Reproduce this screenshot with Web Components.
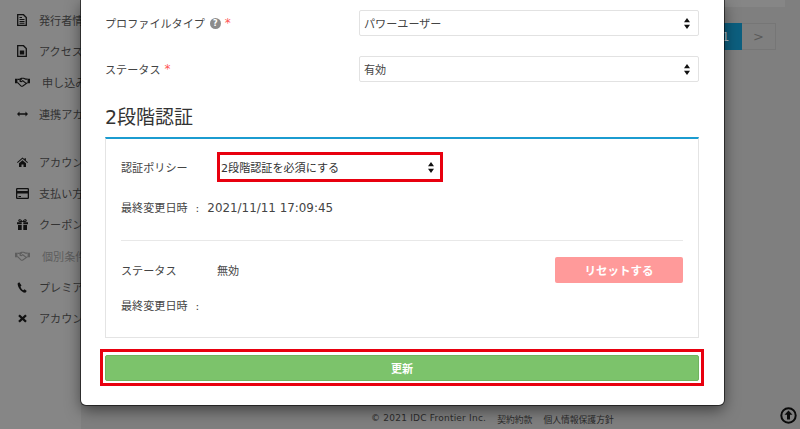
<!DOCTYPE html>
<html lang="ja">
<head>
<meta charset="utf-8">
<title>2段階認証</title>
<style>
  html, body { margin: 0; height: 100%; }
  body {
    font-family: "DejaVu Sans", "Noto Sans CJK JP", sans-serif;
    font-size: 11.1px;
    color: #333;
    overflow: hidden;
  }
</style>
</head>
<body>
<template id="nav-icons">
  <svg data-name="doc" width="10" height="12" viewBox="0 0 10 12"><path fill="none" stroke="currentColor" stroke-width="1.300" d="M.7.7h5.800L9.300 3.500v7.800H.7z"/><path fill="currentColor" d="M2.500 5h5v1h-5zM2.500 6.900h5v1h-5zM2.500 8.800h5v1h-5zM2.500 3h2.500v1H2.500z"/></svg>
  <svg data-name="file" width="10" height="12" viewBox="0 0 10 12"><path fill="none" stroke="currentColor" stroke-width="1.300" d="M.7.7h5.800L9.300 3.500v7.800H.7z"/><path fill="currentColor" d="M2.800 5.500h4.400v4H2.800z"/></svg>
  <svg data-name="shake" width="15" height="10" viewBox="0 0 15 10"><path fill="currentColor" d="M0 1.800h2.400v4.400H0zM12.600 1.800H15v4.400h-2.400z"/><path fill="none" stroke="currentColor" stroke-width="1.100" d="M2.400 2.400h1.800L6.300 1.200h2.300l2 .9h2M2.400 5.400l3.500 3.500c.6.500 1.300.5 1.900.1l4.800-3.400M6.800 1.600L4.800 3.900c.9 1.100 2 .9 3-.2l3.700 2.900"/></svg>
  <svg data-name="arrows" width="11" height="6" viewBox="0 0 11 6"><path fill="currentColor" d="M0 3l2.500-2.600V2.200h6V.4L11 3 8.500 5.600V3.800h-6v1.800z"/></svg>
  <svg data-name="home" width="11" height="10" viewBox="0 0 11 10"><path fill="currentColor" d="M5.500 .5l2 1.800V1.200h1.400v2.300L11 5.300l-.7.7-4.800-4.200L.7 6 0 5.300zM2 6.200l3.500-3 3.500 3V10H6.500V7.500h-2V10H2z"/></svg>
  <svg data-name="card" width="13" height="11" viewBox="0 0 13 11"><path fill="currentColor" fill-rule="evenodd" d="M1.200 0h10.600A1.200 1.200 0 0 1 13 1.200v8.600A1.200 1.200 0 0 1 11.800 11H1.200A1.200 1.200 0 0 1 0 9.800V1.200A1.200 1.200 0 0 1 1.200 0zM1.300 1.300v1.700h10.400V1.300zM1.300 5.500v4.200h10.400V5.500zM2.500 7.900h2.500v1H2.500z"/></svg>
  <svg data-name="gift" width="11" height="11" viewBox="0 0 11 11"><path fill="currentColor" d="M0 3.300h4.700v2H0zM6.300 3.300H11v2H6.300zM1 6h3.700v5H1zM6.300 6H10v5H6.300zM2.800.2C4 .2 5 1.300 5.500 2.500 6 1.300 7 .2 8.200.2c1 0 1.600.7 1.600 1.400 0 .8-.6 1.400-1.600 1.400H2.800c-1 0-1.600-.6-1.600-1.400C1.200.9 1.800.2 2.800.2zm0 1c-.6 0-.6.8 0 .8h1.500c-.4-.5-1-.8-1.500-.8zm5.400 0c-.5 0-1.100.3-1.500.8h1.500c.6 0 .6-.8 0-.8z"/></svg>
  <svg data-name="phone" width="10" height="11" viewBox="0 0 10 11"><path fill="currentColor" d="M2.300 .3L.7 1.200C.2 4.500 3.800 10.300 8.300 10.800l1.500-1.700-2.300-1.800-1.100 1C5 7.800 3.700 5.600 3.500 4.400l1-.9z"/></svg>
  <svg data-name="cross" width="9" height="9" viewBox="0 0 9 9"><path fill="currentColor" d="M1.800.4L4.500 3 7.200.4 8.800 2 6.200 4.500 8.800 7 7.200 8.600 4.500 6 1.800 8.600.2 7l2.600-2.500L.2 2z"/></svg>
</template>

<app-page>
  <side-nav slot="nav">
    <nav-item icon="doc">発行者情報</nav-item>
    <nav-item icon="file">アクセスキー</nav-item>
    <nav-item icon="shake" wide>申し込み</nav-item>
    <nav-item icon="arrows">連携アカウ</nav-item>
    <nav-item icon="home" group>アカウント</nav-item>
    <nav-item icon="card">支払い方法</nav-item>
    <nav-item icon="gift">クーポン</nav-item>
    <nav-item icon="shake" wide muted>個別条件</nav-item>
    <nav-item icon="phone">プレミアム</nav-item>
    <nav-item icon="cross">アカウント</nav-item>
  </side-nav>
  <page-pager slot="main"></page-pager>
  <page-foot slot="foot"></page-foot>
  <modal-dialog slot="modal">
    <form-row required help label="プロファイルタイプ"><select-box>パワーユーザー</select-box></form-row>
    <form-row required label="ステータス"><select-box>有効</select-box></form-row>
    <two-factor></two-factor>
    <save-button>更新</save-button>
  </modal-dialog>
</app-page>

<script>
class AppPage extends HTMLElement {
  constructor() {
    super();
    this.attachShadow({ mode: 'open' });
    this.shadowRoot.innerHTML = `
      <style>
        :host {
          display: grid;
          grid-template-columns: 81px 1fr;
          grid-template-rows: 1fr auto;
          position: relative;
          height: 429px;
          overflow: hidden;
          background: #7f7f7f;
        }
        .nav { background: #868686; grid-row: 1 / 3; overflow: hidden; }
        .main { min-width: 0; }
        .foot { grid-column: 2; }
        .modal { position: absolute; top: 0; left: 81px; z-index: 2; }
      </style>
      <div class="nav"><slot name="nav"></slot></div>
      <div class="main"><slot name="main"></slot></div>
      <div class="foot"><slot name="foot"></slot></div>
      <div class="modal"><slot name="modal"></slot></div>
    `;
  }
}

class SideNav extends HTMLElement {
  constructor() {
    super();
    this.attachShadow({ mode: 'open' });
    this.shadowRoot.innerHTML = `
      <style>
        :host { display: flex; flex-direction: column; width: 200px; padding-top: 4px; }
      </style>
      <slot></slot>
    `;
  }
}

class NavItem extends HTMLElement {
  constructor() {
    super();
    this.attachShadow({ mode: 'open' });
  }

  connectedCallback() {
    const name = this.getAttribute('icon');
    const icon = document.getElementById('nav-icons').content.querySelector(`[data-name="${name}"]`).cloneNode(true);
    this.shadowRoot.innerHTML = `
      <style>
        :host {
          display: flex;
          align-items: center;
          height: 31.3px;
          color: #111;
          white-space: nowrap;
        }
        :host([group]) { margin-top: 17px; }
        :host([muted]) { color: #5e5e5e; }
        .icon { width: 39px; flex: none; display: flex; justify-content: center; padding-left: 5px; box-sizing: border-box; }
        :host([wide]) .icon { width: 42px; padding-right: 3px; }
        .label { color: #333; }
        :host([muted]) .label { color: #5e5e5e; }
      </style>
      <span class="icon"></span><span class="label"><slot></slot></span>
    `;
    this.shadowRoot.querySelector('.icon').append(icon);
  }
}

class PagePager extends HTMLElement {
  constructor() {
    super();
    this.attachShadow({ mode: 'open' });
    this.shadowRoot.innerHTML = `
      <style>
        :host { display: block; padding-right: 15px; }
        .bar { height: 7px; background: #868686; }
        .pages { display: flex; justify-content: flex-end; margin: 16px 9px 0 0; font-size: 12px; }
        .pages span { display: flex; align-items: center; justify-content: center; height: 27px; box-sizing: border-box; }
        .cur { width: 33px; background: #0c5f7f; color: #b0c4d0; }
        .next { width: 34px; color: #5a5a5a; border: 1px solid #767676; border-left: 0; font-size: 13px; }
      </style>
      <div class="bar"></div>
      <div class="pages"><span class="cur">1</span><span class="next">&gt;</span></div>
    `;
  }
}

class PageFoot extends HTMLElement {
  constructor() {
    super();
    this.attachShadow({ mode: 'open' });
    this.shadowRoot.innerHTML = `
      <style>
        :host {
          display: flex;
          align-items: center;
          height: 24px;
          color: #2b2b2b;
          font-size: 8.8px;
          padding-left: 290px;
          padding-right: 3px;
        }
        .links { display: flex; gap: 11px; flex: 1; white-space: nowrap; padding-top: 4px; }
        .copy { font-size: 9px; letter-spacing: .22px; }
        svg { width: 17px; height: 17px; margin-top: -3px; }
      </style>
      <div class="links"><span class="copy">© 2021 IDC Frontier Inc.</span><span>契約約款</span><span>個人情報保護方針</span></div>
      <svg viewBox="0 0 17 17"><circle cx="8.500" cy="8.500" r="7.200" fill="none" stroke="#0a0a0a" stroke-width="2"/><path fill="#0a0a0a" d="M8.500 3.600l4 4.200h-2.500v4.800H7V7.800H4.500z"/></svg>
    `;
  }
}

class ModalDialog extends HTMLElement {
  constructor() {
    super();
    this.attachShadow({ mode: 'open' });
    this.shadowRoot.innerHTML = `
      <style>
        :host {
          display: flex;
          flex-direction: column;
          box-sizing: border-box;
          width: 643px;
          height: 405px;
          padding: 10px 25px 0 24px;
          background: #fff;
          border-radius: 0 0 5px 5px;
          box-shadow: 0 0 0 1px rgba(0, 0, 0, .55), 0 5px 15px rgba(0, 0, 0, .5);
        }
      </style>
      <slot></slot>
    `;
  }
}

class FormRow extends HTMLElement {
  constructor() {
    super();
    this.attachShadow({ mode: 'open' });
  }

  connectedCallback() {
    const help = this.hasAttribute('help') ? '<span class="help">?</span>' : '';
    const star = this.hasAttribute('required') ? '<span class="star">*</span>' : '';
    this.shadowRoot.innerHTML = `
      <style>
        :host { display: flex; align-items: center; margin-bottom: 20px; }
        .label { width: 254px; flex: none; display: flex; align-items: center; gap: 5px; color: #444; }
        .help {
          width: 11px; height: 11px; border-radius: 50%;
          background: #8c8c8c; color: #fff; font-size: 8px; font-weight: bold;
          display: flex; align-items: center; justify-content: center;
        }
        .star { color: #f55; font-size: 12px; margin-left: -1px; }
        .field { flex: 1; }
      </style>
      <div class="label"><span>${this.getAttribute('label')}</span>${help}${star}</div>
      <div class="field"><slot></slot></div>
    `;
  }
}

class SelectBox extends HTMLElement {
  constructor() {
    super();
    this.attachShadow({ mode: 'open' });
    this.shadowRoot.innerHTML = `
      <style>
        :host {
          display: flex;
          align-items: center;
          justify-content: space-between;
          box-sizing: border-box;
          height: 26px;
          padding: 0 8px 0 4px;
          background: #fff;
          border: 1px solid #e2e2e2;
          border-radius: 2px;
          color: #444;
        }
        :host([alert]) {
          height: 30px;
          border: 3px solid #e8000f;
          border-radius: 0;
          padding: 0 6px 0 1px;
          color: #333;
        }
        svg { width: 6px; height: 11px; flex: none; }
      </style>
      <span><slot></slot></span>
      <svg viewBox="0 0 6 11"><path fill="#111" d="M3 0l3 4.200H0zM3 11L0 6.800h6z"/></svg>
    `;
  }
}

class TwoFactor extends HTMLElement {
  constructor() {
    super();
    this.attachShadow({ mode: 'open' });
    this.shadowRoot.innerHTML = `
      <style>
        :host { display: block; }
        h2 { margin: 0; height: 35px; font-size: 19px; font-weight: normal; line-height: 30px; color: #333; }
        .panel {
          box-sizing: border-box;
          height: 201px;
          padding: 13px 15px 0;
          border: 1px solid #e4e4e4;
          border-top: 2px solid #1b9cd0;
          color: #444;
        }
        .row { display: grid; grid-template-columns: 96px 1fr; align-items: center; }
        .policy { width: 322px; }
        .stamp { margin-top: 19px; height: 14px; line-height: 14px; }
        .stamp b { font-weight: normal; margin: 0 8px; }
        .stamp i { font-style: normal; font-size: 11.9px; }
        hr { border: 0; border-top: 1px solid #e8e8e8; margin: 25px 0 16px; }
        .status { grid-template-columns: 96px 1fr auto; }
        .reset {
          display: flex; align-items: center; justify-content: center;
          width: 128px; height: 26px;
          background: #ff9a9a; color: #fff; font-weight: bold; font-size: 11.500px;
          border-radius: 2px;
        }
        .last { margin-top: 17px; }
      </style>
      <h2>2段階認証</h2>
      <div class="panel">
        <div class="row policy"><span>認証ポリシー</span><select-box alert>2段階認証を必須にする</select-box></div>
        <div class="stamp">最終変更日時<b>:</b><i>2021/11/11 17:09:45</i></div>
        <hr>
        <div class="row status"><span>ステータス</span><span>無効</span><span class="reset">リセットする</span></div>
        <div class="stamp last">最終変更日時<b>:</b></div>
      </div>
    `;
  }
}

class SaveButton extends HTMLElement {
  constructor() {
    super();
    this.attachShadow({ mode: 'open' });
    this.shadowRoot.innerHTML = `
      <style>
        :host {
          display: block;
          box-sizing: border-box;
          height: 37px;
          margin: 11px -5px 0;
          padding: 3px 2px 2px;
          border: 3px solid #e8000f;
          background: #fff;
        }
        div {
          display: flex; align-items: center; justify-content: center;
          height: 26px;
          background: #7cc36b;
          border: 1px solid #6fb35e;
          box-sizing: border-box;
          border-radius: 2px;
          color: #fff;
          font-weight: bold;
        }
      </style>
      <div><slot></slot></div>
    `;
  }
}

customElements.define('app-page', AppPage);
customElements.define('side-nav', SideNav);
customElements.define('nav-item', NavItem);
customElements.define('page-pager', PagePager);
customElements.define('page-foot', PageFoot);
customElements.define('modal-dialog', ModalDialog);
customElements.define('form-row', FormRow);
customElements.define('select-box', SelectBox);
customElements.define('two-factor', TwoFactor);
customElements.define('save-button', SaveButton);
</script>
</body>
</html>
